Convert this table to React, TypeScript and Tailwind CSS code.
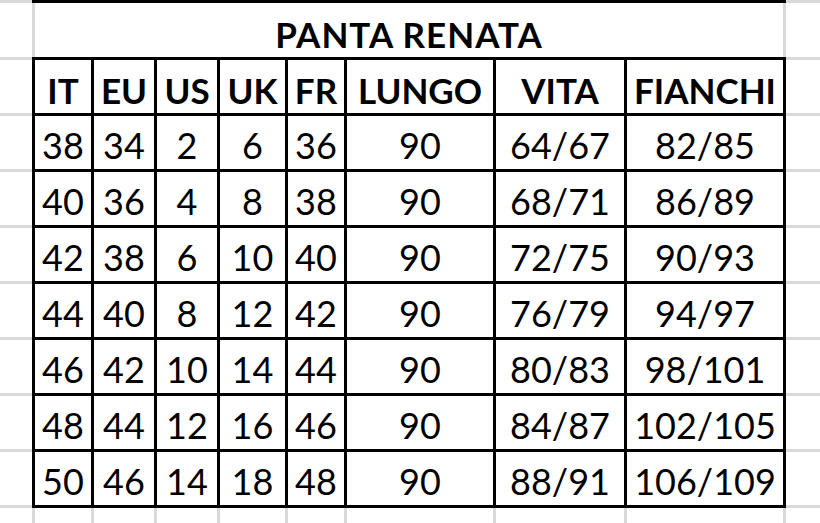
import React from 'react';

const header = ['IT', 'EU', 'US', 'UK', 'FR', 'LUNGO', 'VITA', 'FIANCHI'];
const rows = [
  ['38', '34', '2', '6', '36', '90', '64/67', '82/85'],
  ['40', '36', '4', '8', '38', '90', '68/71', '86/89'],
  ['42', '38', '6', '10', '40', '90', '72/75', '90/93'],
  ['44', '40', '8', '12', '42', '90', '76/79', '94/97'],
  ['46', '42', '10', '14', '44', '90', '80/83', '98/101'],
  ['48', '44', '12', '16', '46', '90', '84/87', '102/105'],
  ['50', '46', '14', '18', '48', '90', '88/91', '106/109'],
];

// gray sheet gridlines beside the table
function Margin() {
  return (
    <div className="flex flex-col h-full">
      <div className="h-[57px] shrink-0 border-t-[3px] border-[#d9d9d9]" />
      {Array.from({ length: 8 }).map((_, i) => (
        <div key={i} className="h-[56px] shrink-0 border-t-[3px] border-[#d9d9d9]" />
      ))}
      <div className="flex-1 border-t-[3px] border-[#d9d9d9]" />
    </div>
  );
}

export default function App() {
  return (
    <div className="flex w-[820px] h-[523px] bg-white overflow-hidden text-black" style={{ fontFamily: 'Lato, "Open Sans", sans-serif' }}>
      <div className="w-[32px] shrink-0"><Margin /></div>

      <div className="w-[754px] shrink-0 flex flex-col">
        <div className="h-[3px] bg-black shrink-0" />
        <div className="h-[54px] shrink-0 border-x-[3px] border-[#d9d9d9] flex items-center justify-center pt-[8px] text-[35px] tracking-[1px] font-bold leading-none">
          PANTA RENATA
        </div>
        <div className="grid grid-cols-[56px_60px_60px_65px_56px_146px_128px_156px] auto-rows-[53px] gap-[3px] p-[3px] bg-black shrink-0">
          {header.map(h => (
            <div key={h} className="bg-white flex items-center justify-center pt-[7px] text-[35px] font-bold leading-none">{h}</div>
          ))}
          {rows.map((r, i) => r.map((c, j) => (
            <div key={`${i}-${j}`} className="bg-white flex items-center justify-center pt-[5px] text-[36px] leading-none">{c}</div>
          )))}
        </div>
        <div className="flex-1 grid grid-cols-[56px_60px_60px_65px_56px_146px_128px_156px] gap-x-[3px] px-[3px] bg-[#d9d9d9]">
          {header.map(h => <div key={h} className="bg-white" />)}
        </div>
      </div>

      <div className="flex-1"><Margin /></div>
    </div>
  );
}
